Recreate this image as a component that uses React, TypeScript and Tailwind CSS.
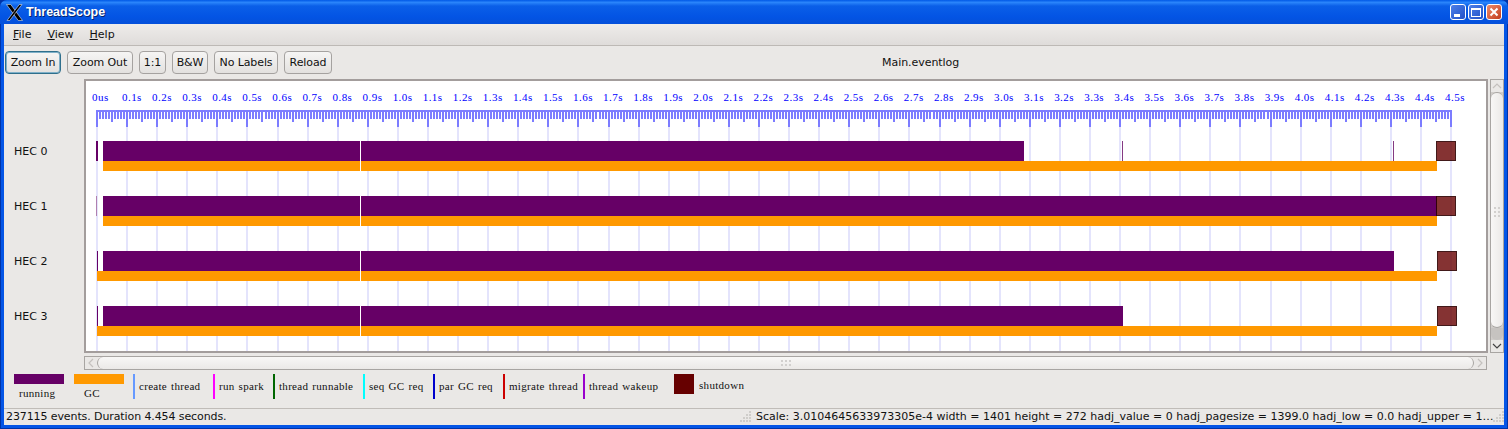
const SANS = "font-['DejaVu_Sans',sans-serif]";

const SPACING = 30.09;
const X0 = 96;

function Ticks() {
  const out = [];
  for (let i = 0; i <= 450; i++) {
    const x = Math.round(X0 + (i * SPACING) / 10);
    const end = i % 10 === 0 ? 127 : i % 5 === 0 ? 122 : 119;
    out.push(<rect key={i} x={x} y={110} width={2} height={end - 110} fill="#7c7cff" />);
  }
  return <g>{out}</g>;
}

const rows = [
  { y: 141, small: [96, 2], smallFill: "#660066", main: [103, 921], orange: [103, 1334], marks: [1122, 1393], end: 1436 },
  { y: 196, small: [96, 1], smallFill: "#b080b0", main: [103, 1334], orange: [103, 1334], marks: [], end: 1436 },
  { y: 251, small: [97, 1], smallFill: "#660066", main: [103, 1291], orange: [97, 1340], marks: [], end: 1437 },
  { y: 306, small: [97, 1], smallFill: "#660066", main: [103, 1020], orange: [97, 1340], marks: [], end: 1437 },
];

function Timeline() {
  const major = Array.from({ length: 46 }, (_, i) => i);
  return (
    <svg viewBox="86 81 1400 270" width={1400} height={270} className="block" shapeRendering="crispEdges">
      <rect x={86} y={81} width={1400} height={270} fill="#ffffff" />
      {major.map((k) => (
        <rect key={k} x={Math.round(X0 + k * SPACING)} y={127} width={2} height={224} fill="#e4e4fc" />
      ))}
      <Ticks />
      <rect x={96} y={110} width={1356} height={2} fill="#7c7cff" />
      {major.map((k) => (
        <text
          key={k}
          x={k === 0 ? 92 : 122 + (k - 1) * 30.07}
          y={101}
          fill="#0000ff"
          fontSize={11}
          letterSpacing={0.45}
          fontFamily="'Liberation Serif', serif"
          shapeRendering="auto"
        >
          {k === 0 ? "0us" : `${(k / 10).toFixed(1)}s`}
        </text>
      ))}
      {rows.map((r) => (
        <g key={r.y}>
          <rect x={r.small[0]} y={r.y} width={r.small[1]} height={20} fill={r.smallFill} />
          <rect x={r.main[0]} y={r.y} width={r.main[1]} height={20} fill="#660066" />
          <rect x={r.orange[0]} y={r.y + 20} width={r.orange[1]} height={10} fill="#ff9900" />
          <rect x={360} y={r.y} width={1} height={30} fill="#ffffff" />
          {r.marks.map((m) => (
            <rect key={m} x={m} y={r.y} width={1} height={20} fill="#843a84" />
          ))}
          <rect x={r.end} y={r.y} width={20} height={20} fill="#660000" fillOpacity={0.8} />
          <rect x={r.end + 0.5} y={r.y + 0.5} width={19} height={19} fill="none" stroke="#000000" strokeOpacity={0.5} strokeWidth={1} />
        </g>
      ))}
    </svg>
  );
}

function Dots() {
  return (
    <div className="grid grid-cols-2 gap-[2px] mt-[3px]">
      {[0, 1, 2, 3, 4, 5].map((i) => (
        <div key={i} className="w-[2px] h-[2px] bg-[#d2d0ce]" />
      ))}
    </div>
  );
}

function HDots() {
  return (
    <div className="grid grid-cols-3 gap-[2px]">
      {[0, 1, 2, 3, 4, 5].map((i) => (
        <div key={i} className="w-[2px] h-[2px] bg-[#d2d0ce]" />
      ))}
    </div>
  );
}

function Grip() {
  const pts: number[][] = [];
  for (let r = 0; r < 4; r++) for (let c = 3 - r; c < 4; c++) pts.push([c * 3, r * 3]);
  return (
    <svg width={12} height={12} className="shrink-0">
      {pts.map(([x, y], i) => (
        <rect key={i} x={x} y={y} width={2} height={2} fill="#cfcdca" />
      ))}
    </svg>
  );
}

function TB({ label, focus, w }: { label: string; focus?: boolean; w: string }) {
  return (
    <div
      className={
        focus
          ? `${w} h-[23px] pt-[1px] flex items-center justify-center whitespace-nowrap rounded-[4px] border border-[#2f6f8c] shadow-[inset_0_0_0_1px_#7fb0c8] bg-gradient-to-b from-[#f6f5f4] to-[#e3e1df] text-[11px] tracking-[-0.1px] text-[#111]`
          : `${w} h-[23px] pt-[1px] flex items-center justify-center whitespace-nowrap rounded-[4px] border border-[#a5a2a0] bg-gradient-to-b from-[#f6f5f4] to-[#e3e1df] text-[11px] tracking-[-0.1px] text-[#111]`
      }
    >
      {label}
    </div>
  );
}

function MenuItem({ first, rest, cls }: { first: string; rest: string; cls: string }) {
  return (
    <span className={cls}>
      <span className="underline">{first}</span>
      {rest}
    </span>
  );
}

const SERIF = "font-['Liberation_Serif',serif] text-[11px] tracking-[0.3px] [word-spacing:1px] text-[#111] whitespace-nowrap";

function Marker({ color, text, w }: { color: string; text: string; w: string }) {
  return (
    <div className={`flex items-center h-[25px] ${w}`}>
      <div className={`w-[2px] h-[25px] mr-[4px] ${color}`} />
      <span className={SERIF}>{text}</span>
    </div>
  );
}

function WinBtn({ cls, children }: { cls: string; children: React.ReactNode }) {
  return (
    <div className={`w-[16px] h-[16px] rounded-[3px] border border-white flex items-center justify-center ${cls}`}>
      {children}
    </div>
  );
}

export default function App() {
  return (
    <div className={`w-[1508px] h-[429px] flex flex-col overflow-hidden bg-[#0033a8] ${SANS}`}>
      <div className="h-[24px] shrink-0 flex items-center pl-[6px] pr-[6px] rounded-t-[7px] bg-[linear-gradient(to_bottom,#0058e6_0%,#2a85fb_10%,#0a5fe8_25%,#0354e4_70%,#0450da_100%)]">
        <svg width={17} height={17} viewBox="0 0 16 16" className="shrink-0">
          <path d="M0.5 0.5H4.5L15.5 15.5H11.5Z" fill="#000" stroke="#fff" strokeWidth={0.5} />
          <path d="M12.5 0.5H15L3.5 15.5H1Z" fill="#000" stroke="#fff" strokeWidth={0.5} />
        </svg>
        <span className="ml-[3px] text-white font-bold text-[12.5px] font-['Liberation_Sans',sans-serif] [text-shadow:1px_1px_0_#06246e]">
          ThreadScope
        </span>
        <div className="ml-auto flex gap-[2px]">
          <WinBtn cls="bg-gradient-to-br from-[#4d7fe8] to-[#2250c8]">
            <div className="w-[6px] h-[3px] bg-white mt-[7px] mr-[2px]" />
          </WinBtn>
          <WinBtn cls="bg-gradient-to-br from-[#4d7fe8] to-[#2250c8]">
            <div className="w-[10px] h-[9px] border border-white border-t-[2px]" />
          </WinBtn>
          <WinBtn cls="bg-gradient-to-br from-[#ec8a6a] to-[#c23a18]">
            <svg width={10} height={10} viewBox="0 0 10 10">
              <path d="M1.5 1.5L8.5 8.5M8.5 1.5L1.5 8.5" stroke="#fff" strokeWidth={2} />
            </svg>
          </WinBtn>
        </div>
      </div>

      <div className="flex-1 flex flex-col mx-[1px] mb-[1px] border-x-[3px] border-b-[3px] border-[#0455e6] bg-[#eae8e6] min-h-0 text-[#111]">
        <div className="h-[22px] shrink-0 pt-[2px] flex items-center text-[11px] bg-gradient-to-b from-[#eeecea] to-[#dfdcda] border-b border-[#bdb9b5]">
          <MenuItem first="F" rest="ile" cls="ml-[9px]" />
          <MenuItem first="V" rest="iew" cls="ml-[16px]" />
          <MenuItem first="H" rest="elp" cls="ml-[16px]" />
        </div>

        <div className="h-[33px] shrink-0 flex items-start pt-[5px] pl-[1px]">
          <div className="flex gap-[6px]">
            <TB label="Zoom In" focus w="w-[56px]" />
            <TB label="Zoom Out" w="w-[66px]" />
            <TB label="1:1" w="w-[27px]" />
            <TB label="B&W" w="w-[36px]" />
            <TB label="No Labels" w="w-[64px]" />
            <TB label="Reload" w="w-[48px]" />
          </div>
          <div className="ml-[550px] pt-[1px] text-[11px] tracking-[-0.05px] h-[23px] flex items-center whitespace-nowrap">Main.eventlog</div>
        </div>

        <div className="flex shrink-0 h-[274px]">
          <div className="w-[80px] shrink-0 pt-[46px] pl-[10px] text-[11px]">
            <div className="h-[55px] flex items-center">HEC 0</div>
            <div className="h-[55px] flex items-center">HEC 1</div>
            <div className="h-[55px] flex items-center">HEC 2</div>
            <div className="h-[55px] flex items-center">HEC 3</div>
          </div>
          <div className="w-[1404px] shrink-0 border-2 border-[#a39d9c] bg-white">
            <Timeline />
          </div>
          <div className="w-[14px] ml-[2px] shrink-0 border border-[#a8a5a2] flex flex-col items-stretch bg-[#cfccc9]">
            <div className="h-[12px] shrink-0 bg-[#eae8e6] flex items-center justify-center">
              <svg width={10} height={6} viewBox="0 0 10 6">
                <path d="M1 5L5 1L9 5" fill="none" stroke="#c4c1be" strokeWidth={1.2} />
              </svg>
            </div>
            <div className="flex-1 relative">
              <div className="absolute inset-x-0 top-0 h-[236px] rounded-[8px] border-t border-b border-[#a8a5a2] bg-gradient-to-r from-[#f8f7f6] to-[#ebe9e7] flex items-center justify-center z-10">
                <Dots />
              </div>
              <div className="absolute inset-x-0 bottom-0 h-[12px] rounded-b-[8px] bg-[#c6c3c0]" />
            </div>
            <div className="h-[12px] shrink-0 bg-[#eae8e6] flex items-center justify-center">
              <svg width={10} height={6} viewBox="0 0 10 6">
                <path d="M1 1L5 5L9 1" fill="none" stroke="#444" strokeWidth={1.2} />
              </svg>
            </div>
          </div>
        </div>

        <div className="ml-[80px] mt-[3px] w-[1403px] h-[14px] shrink-0 border border-[#a8a5a2] flex items-stretch">
          <div className="w-[12px] shrink-0 flex items-center justify-center">
            <svg width={6} height={10} viewBox="0 0 6 10">
              <path d="M5 1L1 5L5 9" fill="none" stroke="#c4c1be" strokeWidth={1.2} />
            </svg>
          </div>
          <div className="flex-1 rounded-[8px] border-l border-r border-[#a8a5a2] bg-gradient-to-b from-[#f8f7f6] to-[#ebe9e7] flex items-center justify-center">
            <HDots />
          </div>
          <div className="w-[12px] shrink-0 flex items-center justify-center">
            <svg width={6} height={10} viewBox="0 0 6 10">
              <path d="M1 1L5 5L1 9" fill="none" stroke="#c4c1be" strokeWidth={1.2} />
            </svg>
          </div>
        </div>

        <div className="flex shrink-0 mt-[4px] pl-[10px] h-[34px] items-start">
          <div className="w-[60px]">
            <div className="w-[50px] h-[10px] bg-[#660066]" />
            <div className={`${SERIF} pl-[5px] mt-[3px] leading-[13px]`}>running</div>
          </div>
          <div className="w-[59px]">
            <div className="w-[50px] h-[10px] bg-[#ff9900]" />
            <div className={`${SERIF} pl-[10px] mt-[3px] leading-[13px]`}>GC</div>
          </div>
          <Marker color="bg-[#6699ff]" text="create thread" w="w-[80px]" />
          <Marker color="bg-[#ff00ff]" text="run spark" w="w-[60px]" />
          <Marker color="bg-[#006600]" text="thread runnable" w="w-[90px]" />
          <Marker color="bg-[#00ffff]" text="seq GC req" w="w-[70px]" />
          <Marker color="bg-[#0000cc]" text="par GC req" w="w-[70px]" />
          <Marker color="bg-[#cc0000]" text="migrate thread" w="w-[80px]" />
          <Marker color="bg-[#9900cc]" text="thread wakeup" w="w-[91px]" />
          <div className="flex items-center h-[20px]">
            <div className="w-[20px] h-[20px] bg-[#660000] mr-[5px]" />
            <span className={`${SERIF} pt-[2px]`}>shutdown</span>
          </div>
        </div>

        <div className="flex-1 min-h-0 flex items-center border-t border-[#c0bcb8] text-[11px] whitespace-nowrap">
          <span className="ml-[2px] w-[734px] shrink-0 tracking-[-0.1px]">237115 events. Duration 4.454 seconds.</span>
          <Grip />
          <span className="ml-[4px]">
            Scale: 3.0104645633973305e-4 width = 1401 height = 272 hadj_value = 0 hadj_pagesize = 1399.0 hadj_low = 0.0 hadj_upper = 1…
          </span>
          <div className="ml-auto">
            <Grip />
          </div>
        </div>
      </div>
    </div>
  );
}
